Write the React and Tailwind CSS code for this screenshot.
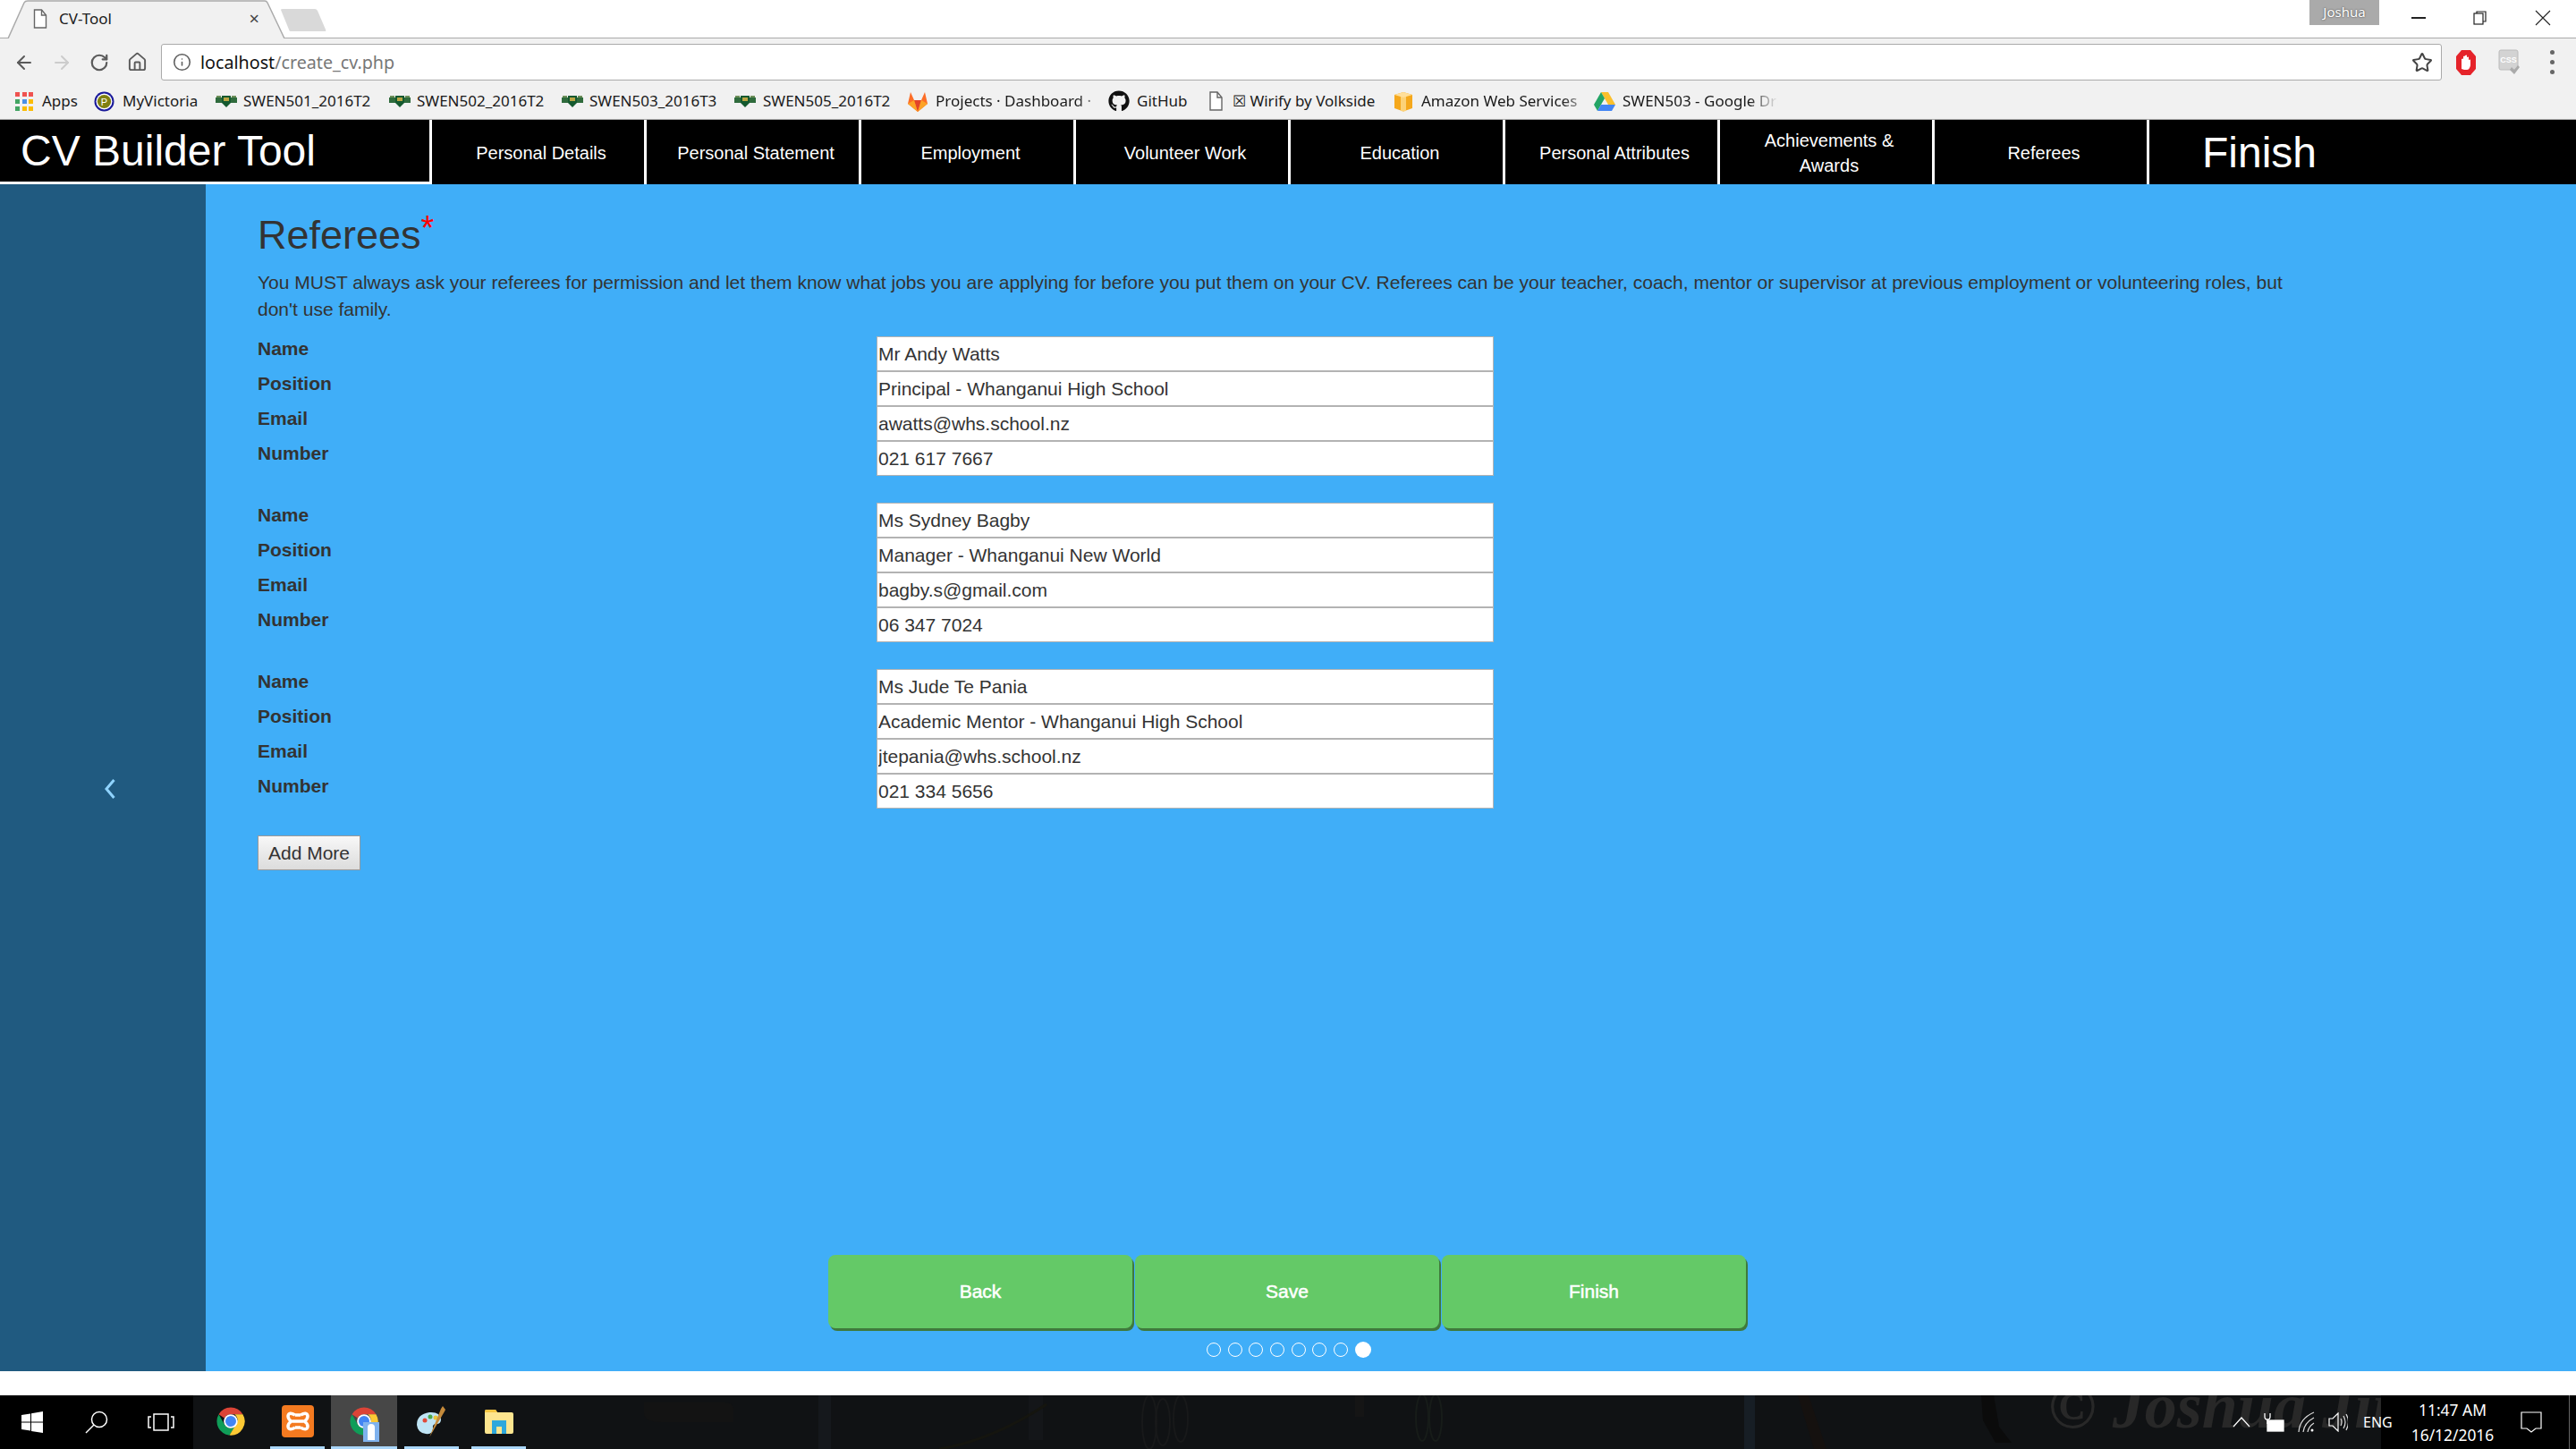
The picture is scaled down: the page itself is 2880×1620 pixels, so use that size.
import React from "react";
import { ArrowLeft, ArrowRight, RotateCw, Info, Star, House } from "lucide-react";
import { FaGithub } from "react-icons/fa";

const navItems = ["Personal Details", "Personal Statement", "Employment", "Volunteer Work", "Education", "Personal Attributes", "Achievements & Awards", "Referees"];

const referees = [
  ["Mr Andy Watts", "Principal - Whanganui High School", "awatts@whs.school.nz", "021 617 7667"],
  ["Ms Sydney Bagby", "Manager - Whanganui New World", "bagby.s@gmail.com", "06 347 7024"],
  ["Ms Jude Te Pania", "Academic Mentor - Whanganui High School", "jtepania@whs.school.nz", "021 334 5656"],
];
const labels = ["Name", "Position", "Email", "Number"];

function Crest() {
  return (
    <svg width="24" height="14" viewBox="0 0 24 14">
      <rect x="0" y="3" width="7" height="6" fill="#2f6b3c" />
      <rect x="17" y="3" width="7" height="6" fill="#2f6b3c" />
      <rect x="1" y="1" width="5" height="2" fill="#6d8f5a" />
      <rect x="18" y="1" width="5" height="2" fill="#6d8f5a" />
      <path d="M7 1h10v8l-5 5-5-5z" fill="#14592f" />
      <rect x="9" y="3" width="6" height="4" fill="#b9a443" />
    </svg>
  );
}

function DocIcon({ w = 15, h = 22, color = "#666" }) {
  return (
    <svg width={w} height={h} viewBox="0 0 15 22" fill="#fff" stroke={color} strokeWidth="1.4">
      <path d="M1 1h8l5 6v14H1z" />
      <path d="M9 1v6h5" fill="none" />
    </svg>
  );
}

function AppsIcon() {
  const c = ["#ef5350", "#ef5350", "#ef5350", "#43a563", "#4a90e8", "#fbbc05", "#43a563", "#fbbc05", "#fbbc05"];
  return (
    <div className="grid grid-cols-3 gap-[3px] w-[20px]">
      {c.map((x, i) => (
        <span key={i} className="w-[5px] h-[5px]" style={{ background: x }} />
      ))}
    </div>
  );
}

function VicIcon() {
  return (
    <svg width="23" height="23" viewBox="0 0 23 23">
      <circle cx="11.5" cy="11.5" r="11" fill="#1a1a9a" />
      <circle cx="11.5" cy="11.5" r="9" fill="#fff" />
      <circle cx="11.5" cy="11.5" r="7.6" fill="#7f7f10" />
      <text x="11.5" y="15.5" textAnchor="middle" fontSize="11" fill="#fff" fontFamily="Liberation Sans">P</text>
    </svg>
  );
}

function FoxIcon() {
  return (
    <svg width="24" height="23" viewBox="0 0 24 23">
      <path d="M12 23 1 14 4 1l4 9h8l4-9 3 13z" fill="#fc6d26" />
      <path d="M12 23 8 10h8z" fill="#e24329" />
      <path d="M12 23 1 14 8 10z" fill="#fca326" />
      <path d="M12 23l11-9-7-4z" fill="#fca326" />
    </svg>
  );
}

function AwsIcon() {
  return (
    <svg width="22" height="23" viewBox="0 0 22 23">
      <path d="M1 4 11 1l10 3v15l-10 3.500-10-3.500z" fill="#f5a81c" />
      <path d="M8 3h6v19l-3 .5-3-.5z" fill="#fcd277" />
      <path d="M1 4l10 3 10-3-10-3z" fill="#ffdf9a" />
    </svg>
  );
}

function DriveIcon() {
  return (
    <svg width="24" height="23" viewBox="0 0 24 23">
      <path d="M8 1h8l8 14h-8z" fill="#fbc02d" />
      <path d="M8 1 0 15l4 7 8-14z" fill="#23a566" />
      <path d="M4 22h16l4-7H8z" fill="#4285f4" />
    </svg>
  );
}

function ChromeLogo({ size = 34 }) {
  return (
    <svg width={size} height={size} viewBox="0 0 48 48">
      <path d="M5 13A22 22 0 0 1 43 13H24A11 11 0 0 0 14 19z" fill="#db4437" />
      <path d="M5 13A22 22 0 0 0 22 46L31 32A11 11 0 0 1 14 29z" fill="#0f9d58" />
      <path d="M43 13A22 22 0 0 1 22 46L33 28A11 11 0 0 0 30 13z" fill="#fcc934" />
      <circle cx="24" cy="24" r="11" fill="#fff" />
      <circle cx="24" cy="24" r="8.500" fill="#4285f4" />
    </svg>
  );
}

function Bookmark({ icon, children, iconW, width, fade, className = "" }) {
  return (
    <div className={`flex items-center shrink-0 ${className}`} style={{ width }}>
      <span className="flex items-center justify-center shrink-0" style={{ width: iconW }}>{icon}</span>
      <span className={`whitespace-nowrap ${fade ? "overflow-hidden [mask-image:linear-gradient(90deg,#000_82%,transparent)] flex-1" : ""}`}>{children}</span>
    </div>
  );
}

function BrowserChrome() {
  return (
    <div className="shrink-0 font-['Noto_Sans',sans-serif] text-[#202020]">
      <div className="relative h-[43px] bg-white border-b border-[#aaaaaa]">
        <svg className="absolute left-0 top-0" width="380" height="44" viewBox="0 0 380 44">
          <path d="M0 43h9L27 3q1-2 4-2h265q2 0 3 2l19 40" fill="#f1f1f1" stroke="#aaaaaa" strokeWidth="1.500" />
          <path d="M0 43.500H318" stroke="#f1f1f1" strokeWidth="1" />
          <path d="M314 11q0-1 2-1h36q2 0 3 2l9 21q1 2-1 2h-38q-2 0-2-2z" fill="#d9d9d9" />
        </svg>
        <div className="relative flex items-center h-[42px] w-[310px] pl-[37px]">
          <DocIcon w={16} h={22} />
          <span className="ml-[13px] text-[17px] leading-[24px]">CV-Tool</span>
          <span className="ml-auto mr-[20px] text-[20px] leading-[24px] text-[#444]">×</span>
        </div>
        <div className="absolute right-[2px] top-0 flex items-start h-[42px]">
          <div className="w-[78px] h-[28px] bg-[#aaaaaa] text-white text-[15px] leading-[26px] text-center mr-[9px] [text-shadow:0_0_2px_#333]">Joshua</div>
          <div className="w-[69px] h-[40px] flex items-center justify-center mt-0">
            <span className="w-[16px] h-[1.500px] bg-[#222]" />
          </div>
          <div className="w-[69px] h-[40px] flex items-center justify-center">
            <svg width="15" height="16" viewBox="0 0 15 16" fill="none" stroke="#222" strokeWidth="1.200">
              <path d="M4 3V1h10v11h-3" />
              <rect x="1" y="3" width="10" height="12" />
            </svg>
          </div>
          <div className="w-[71px] h-[40px] flex items-center justify-center">
            <svg width="18" height="18" viewBox="0 0 18 18" stroke="#222" strokeWidth="1.100">
              <path d="M1 1l16 16M17 1 1 17" />
            </svg>
          </div>
        </div>
      </div>
      <div className="bg-[#f1f1f1] border-b border-[#aaaaaa] pb-[2px]">
        <div className="flex h-[52px] items-start pt-[6px]">
          <div className="flex items-center h-[41px] pl-[6px]">
            <span className="w-[42px] flex justify-center"><ArrowLeft size={24} color="#5a5a5a" strokeWidth={2} /></span>
            <span className="w-[42px] flex justify-center"><ArrowRight size={24} color="#cccccc" strokeWidth={2} /></span>
            <span className="w-[42px] flex justify-center"><RotateCw size={22} color="#5a5a5a" strokeWidth={2.400} /></span>
            <span className="w-[42px] flex justify-center"><House size={23} color="#5a5a5a" strokeWidth={2} /></span>
          </div>
          <div className="ml-[6px] flex-1 h-[41px] bg-white border border-[#aaaaaa] rounded-[3px] flex items-center pl-[12px] pr-[9px]">
            <Info size={21} color="#5f5f5f" strokeWidth={1.800} />
            <span className="ml-[10px] text-[19.700px] leading-[28px]">
              <span className="text-[#111]">localhost</span>
              <span className="text-[#777]">/create_cv.php</span>
            </span>
            <Star className="ml-auto" size={24} color="#444" strokeWidth={2} />
          </div>
          <div className="flex items-center h-[41px] pl-[3px] pr-[3px]">
            <span className="w-[48px] flex justify-center">
              <svg width="24" height="30" viewBox="0 0 24 30">
                <path d="M7 1h10l6 7v14l-6 7H7l-6-7V8z" fill="#e5232a" />
                <path d="M7 22V11q2-1 2 0v-3q2-1 2 0V7q2-1 2 0v2q2-1 2 0v3q2-1 2 0v6q-1 5-4 5H10z" fill="#fff" />
              </svg>
            </span>
            <span className="w-[48px] flex justify-center">
              <svg width="24" height="30" viewBox="0 0 24 30">
                <rect x="1" y="1" width="21" height="22" rx="2" fill="#d3d3d3" stroke="#bbb" />
                <text x="11.500" y="15" textAnchor="middle" fontSize="9" fontWeight="700" fill="#fff" fontFamily="Liberation Sans">CSS</text>
                <path d="m13 23 5 5 6-8-2-2-4 5-3-3z" fill="#aaa" />
              </svg>
            </span>
            <span className="w-[48px] flex flex-col items-center gap-[6px]">
              <span className="w-[5px] h-[5px] rounded-full bg-[#666]" />
              <span className="w-[5px] h-[5px] rounded-full bg-[#666]" />
              <span className="w-[5px] h-[5px] rounded-full bg-[#666]" />
            </span>
          </div>
        </div>
        <div className="flex items-center h-[36px] text-[17px] leading-[24px] pl-[17px] text-[#1a1a1a]">
          <Bookmark iconW={20} width={88} icon={<AppsIcon />}><span className="ml-[10px]">Apps</span></Bookmark>
          <Bookmark iconW={23} width={136} icon={<VicIcon />}><span className="ml-[9px]">MyVictoria</span></Bookmark>
          <Bookmark iconW={24} width={194} icon={<Crest />}><span className="ml-[7px]">SWEN501_2016T2</span></Bookmark>
          <Bookmark iconW={24} width={193} icon={<Crest />}><span className="ml-[7px]">SWEN502_2016T2</span></Bookmark>
          <Bookmark iconW={24} width={193} icon={<Crest />}><span className="ml-[7px]">SWEN503_2016T3</span></Bookmark>
          <Bookmark iconW={24} width={193} icon={<Crest />}><span className="ml-[8px]">SWEN505_2016T2</span></Bookmark>
          <Bookmark iconW={24} width={225} icon={<FoxIcon />} fade><span className="ml-[8px]">Projects · Dashboard ·</span></Bookmark>
          <Bookmark iconW={24} width={112} icon={<FaGithub size={24} color="#111" />}><span className="ml-[8px]">GitHub</span></Bookmark>
          <Bookmark iconW={16} width={207} icon={<DocIcon w={15} h={22} />}><span className="ml-[11px]">☒ Wirify by Volkside</span></Bookmark>
          <Bookmark iconW={22} width={224} icon={<AwsIcon />} fade><span className="ml-[9px]">Amazon Web Services</span></Bookmark>
          <Bookmark iconW={24} width={206} icon={<DriveIcon />} fade><span className="ml-[8px]">SWEN503 - Google Drive</span></Bookmark>
        </div>
      </div>
    </div>
  );
}

function NavBar() {
  return (
    <div className="flex h-[72px] bg-black text-white shrink-0">
      <div className="w-[480px] h-[72px] border-b-[3px] border-white flex items-center pl-[23px] text-[48px] leading-[60px]">
        CV Builder Tool
      </div>
      {navItems.map((n) => (
        <div key={n} className="w-[240px] border-l-[3px] border-white flex items-center justify-center pl-[7px] pt-[2px] text-center text-[20px] leading-[28px]">
          {n === "Achievements & Awards" ? <span className="w-[190px]">{n}</span> : n}
        </div>
      ))}
      <div className="flex-1 border-l-[3px] border-white flex items-center pl-[59px] pt-[2px] text-[48px] leading-[60px]">Finish</div>
    </div>
  );
}

function RefereeBlock({ values }) {
  return (
    <div className="flex flex-col">
      {values.map((v, i) => (
        <div key={i} className="flex h-[39px]">
          <label className="w-[692px] shrink-0 font-bold text-[21px] leading-[28px] text-[#333]">{labels[i]}</label>
          <input
            readOnly
            value={v}
            className="w-[690px] h-[39px] bg-white border border-[#b3b3b3] pl-[1px] pr-[2px] text-[21px] text-[#333] outline-none font-['Liberation_Sans',sans-serif]"
          />
        </div>
      ))}
    </div>
  );
}

function Main() {
  return (
    <div className="flex flex-1 min-h-0">
      <div className="w-[230px] shrink-0 bg-[#205a80] flex items-center justify-center pl-[15px] pt-[24px]">
        <svg width="13" height="22" viewBox="0 0 13 22" fill="none">
          <path d="M11.500 1 3 11l8.500 10" stroke="#8fd3fd" strokeWidth="3" />
        </svg>
      </div>
      <div className="flex-1 bg-[#40aef8] pl-[58px] flex flex-col text-[#333]">
        <h1 className="mt-[30px] text-[45px] leading-[45px] font-normal">
          Referees<span className="text-[#ff0000] align-[10px] text-[38px] leading-none">*</span>
        </h1>
        <p className="mt-[16px] w-[2290px] text-[21px] leading-[30px]">
          You MUST always ask your referees for permission and let them know what jobs you are applying for before you put them on your CV. Referees can be your teacher, coach, mentor or supervisor at previous employment or volunteering roles, but don't use family.
        </p>
        <div className="mt-[15px] flex flex-col gap-[30px]">
          {referees.map((r, i) => (
            <RefereeBlock key={i} values={r} />
          ))}
        </div>
        <button className="mt-[30px] w-[115px] h-[39px] border border-[#999] bg-gradient-to-b from-[#f8f8f8] to-[#dcdcdc] text-[21px] leading-none text-[#333]">
          Add More
        </button>
        <div className="mt-auto ml-[638px] flex gap-[3px]">
          {["Back", "Save", "Finish"].map((b) => (
            <button key={b} className="w-[340px] h-[82px] rounded-[8px] bg-[#64c967] text-white text-[21px] font-normal [-webkit-text-stroke:0.5px_white] shadow-[2px_3px_0_#3f7a3c]">
              {b}
            </button>
          ))}
        </div>
        <div className="mt-[15px] mb-[15px] ml-[1061px] flex items-center gap-[7.700px] h-[18px]">
          {[0, 1, 2, 3, 4, 5, 6].map((d) => (
            <span key={d} className="w-[16px] h-[16px] rounded-full border border-white" />
          ))}
          <span className="w-[18px] h-[18px] rounded-full bg-white" />
        </div>
      </div>
    </div>
  );
}

function Wallpaper() {
  return (
    <svg className="absolute left-0 top-0" width="2880" height="60" viewBox="0 0 2880 60" fill="none">
      <path d="M720 8h90q10 0 10 8v14H740q-20 0-20-10z" fill="#131313" />
      <rect x="915" y="0" width="14" height="60" fill="#15181c" />
      <rect x="1150" y="0" width="16" height="50" fill="#141619" />
      <ellipse cx="1285" cy="30" rx="8" ry="30" stroke="#18191a" strokeWidth="2" />
      <ellipse cx="1300" cy="30" rx="8" ry="26" stroke="#18191a" strokeWidth="2" />
      <ellipse cx="1320" cy="26" rx="8" ry="26" stroke="#18191a" strokeWidth="2" />
      <rect x="1515" y="0" width="10" height="24" fill="#151515" />
      <ellipse cx="1590" cy="25" rx="7" ry="26" stroke="#171c19" strokeWidth="2" />
      <ellipse cx="1605" cy="25" rx="7" ry="26" stroke="#171c19" strokeWidth="2" />
      <rect x="1950" y="0" width="12" height="60" fill="#171e25" />
      <path d="M2010 0h12l20 60h-14z" fill="#15110f" />
      <path d="M2215 0h14l6 35 14 18h-18l-14-25z" fill="#0b0b0b" />
      <path d="M1050 60q60-10 120-50" stroke="#15150f" strokeWidth="3" />
    </svg>
  );
}

function Taskbar() {
  return (
    <div className="relative h-[60px] shrink-0 bg-[#101214] overflow-hidden flex text-white font-['Noto_Sans',sans-serif]">
      <Wallpaper />
      <div className="absolute left-[2290px] top-[-24px] font-['Liberation_Serif',serif] italic font-bold text-[#282828] text-[72px] leading-none whitespace-nowrap">
        © Joshua Jin
      </div>
      <div className="relative w-[216px] h-full bg-black flex items-center">
        <span className="w-[72px] flex justify-center pl-[0px]">
          <svg width="24" height="24" viewBox="0 0 24 24" fill="#fff">
            <path d="M0 4l10-1.500V11.500H0zM11 2.300 24 0v11.500H11zM0 12.500h10v9L0 20zM11 12.500h13V24l-13-2z" />
          </svg>
        </span>
        <span className="w-[72px] flex justify-center">
          <svg width="26" height="26" viewBox="0 0 26 26" fill="none" stroke="#fff" strokeWidth="1.500">
            <circle cx="16" cy="10" r="8.500" />
            <path d="M10 16 1 25" />
          </svg>
        </span>
        <span className="w-[72px] flex justify-center">
          <svg width="30" height="20" viewBox="0 0 30 20" fill="none" stroke="#fff" strokeWidth="1.500">
            <rect x="7" y="1" width="16" height="18" />
            <path d="M4 4H1v12h3M26 4h3v12h-3" />
          </svg>
        </span>
      </div>
      <div className="relative flex-1 flex h-full pl-[10px]">
        <div className="w-[63px] h-full flex items-center justify-center border-b-[3px] border-transparent"><ChromeLogo /></div>
        <div className="ml-[13px] w-[61px] h-full flex items-center justify-center border-b-[3px] border-[#a9d6fb]">
          <svg width="36" height="36" viewBox="0 0 36 36" fill="none">
            <rect width="36" height="36" rx="4" fill="#f47a20" />
            <path d="M15 11q-7-4-8 1 0 4 4 6-4 2-4 6 1 5 8 1M21 11q7-4 8 1 0 4-4 6 4 2 4 6-1 5-8 1M15 11h6M15 25h6M12 18h12" stroke="#fff" strokeWidth="3.500" />
          </svg>
        </div>
        <div className="relative ml-[7px] w-[74px] h-full flex items-center justify-center bg-[#474747] border-b-[3px] border-[#a9d6fb]">
          <ChromeLogo />
          <span className="absolute left-[36px] top-[30px] w-[18px] h-[22px] bg-[#7fb2ee] flex items-center justify-center">
            <span className="w-[8px] h-[18px] rounded-t-full bg-white" />
          </span>
        </div>
        <div className="ml-[8px] w-[61px] h-full flex items-center justify-center border-b-[3px] border-[#a9d6fb]">
          <svg width="36" height="36" viewBox="0 0 36 36">
            <path d="M1 22q0-12 14-14 12-1 13 8 0 5-5 5-5 0-4 5 0 7-8 6Q2 31 1 22z" fill="#bfe4f5" />
            <circle cx="10" cy="17" r="2.500" fill="#e04a3a" />
            <circle cx="16" cy="13" r="2.500" fill="#4aa84a" />
            <circle cx="22" cy="14" r="2.500" fill="#e8c33a" />
            <path d="M30 1l3 4-1 2-17 29 13-32z" fill="#c58a3b" />
          </svg>
        </div>
        <div className="ml-[14px] w-[61px] h-full flex items-center justify-center border-b-[3px] border-[#a9d6fb]">
          <svg width="32" height="28" viewBox="0 0 32 28">
            <path d="M0 3q0-2 2-2h10l2 3h16q2 0 2 2v20q0 2-2 2H2q-2 0-2-2z" fill="#fde58f" />
            <path d="M0 3q0-2 2-2h10l2 3H0z" fill="#f5c542" />
            <path d="M8 28V13h16v15h-5v-8h-6v8z" fill="#2fa8dc" />
          </svg>
        </div>
      </div>
      <div className="relative w-[400px] h-full flex items-center pl-[9px] bg-[linear-gradient(90deg,transparent_182px,#000_182px)]">
        <span className="w-[34px] flex justify-center">
          <svg width="20" height="12" viewBox="0 0 20 12" fill="none" stroke="#fff" strokeWidth="1.200"><path d="M1 11 10 1l9 10" /></svg>
        </span>
        <span className="w-[40px] flex justify-center">
          <svg width="24" height="22" viewBox="0 0 24 22" fill="none" stroke="#fff" strokeWidth="1.300">
            <rect x="4" y="9" width="18" height="12" fill="#fff" />
            <path d="M1 1v4q0 3 3 3t3-3V1M4 8v5" stroke="#fff" />
          </svg>
        </span>
        <span className="w-[32px] flex justify-center">
          <svg width="20" height="24" viewBox="0 0 20 24" fill="none" stroke="#ddd" strokeWidth="1.200">
            <path d="M1 23Q2 8 18 1M6 23q1-10 12-16M11 23q1-6 7-10" />
            <circle cx="16" cy="21" r="1.500" fill="#fff" stroke="none" />
          </svg>
        </span>
        <span className="w-[38px] flex justify-center">
          <svg width="22" height="22" viewBox="0 0 22 22" fill="none" stroke="#ddd" strokeWidth="1.200">
            <path d="M1 7h4l6-6v20l-6-6H1z" stroke="#fff" />
            <path d="M14 7q2 4 0 8M17 4q4 7 0 14M20 2q5 9 0 18" />
          </svg>
        </span>
        <span className="ml-[9px] w-[34px] text-[16px] leading-[22px]">ENG</span>
        <div className="ml-[20px] w-[92px] flex flex-col items-center text-[17.400px] leading-[28px] whitespace-nowrap">
          <span className="h-[28px]">11:47 AM</span>
          <span className="h-[28px]">16/12/2016</span>
        </div>
        <span className="ml-[30px] w-[24px] flex justify-center">
          <svg width="24" height="24" viewBox="0 0 24 24" fill="none" stroke="#fff" strokeWidth="1.200"><path d="M1 1h22v18h-6l-5 4-5-4H1z" /></svg>
        </span>
        <span className="absolute right-[7px] top-0 h-full w-[1px] bg-[#666]" />
      </div>
    </div>
  );
}

export default function App() {
  return (
    <div className="w-[2880px] h-[1620px] overflow-hidden flex flex-col bg-white font-['Liberation_Sans',Arial,sans-serif]">
      <BrowserChrome />
      <NavBar />
      <Main />
      <div className="h-[27px] shrink-0 bg-white" />
      <Taskbar />
    </div>
  );
}
